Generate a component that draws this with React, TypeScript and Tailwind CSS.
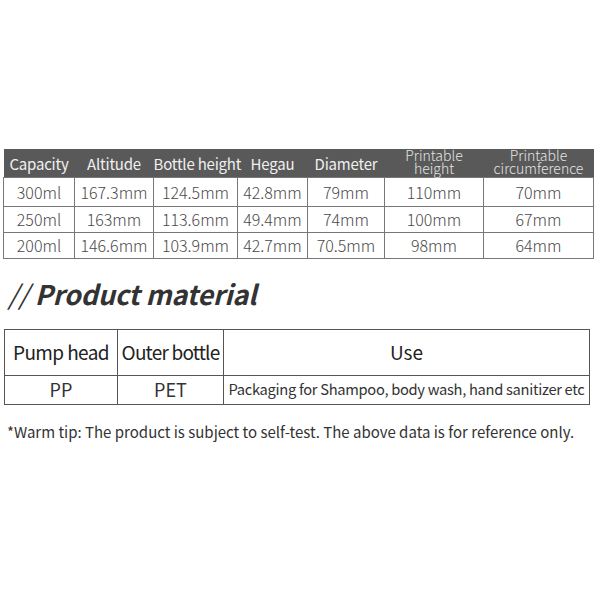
import * as React from "react";

const specHead = [
  { label: "Capacity", w: "w-[71px]" },
  { label: "Altitude", w: "w-[79px]" },
  { label: "Bottle height", w: "w-[84px]" },
  { label: "Hegau", w: "w-[70px]" },
  { label: "Diameter", w: "w-[77px]" },
  { label: "Printable|height", w: "w-[99px]" },
  { label: "Printable|circumference", w: "w-[110px]" },
];

const specRows = [
  ["300ml", "167.3mm", "124.5mm", "42.8mm", "79mm", "110mm", "70mm"],
  ["250ml", "163mm", "113.6mm", "49.4mm", "74mm", "100mm", "67mm"],
  ["200ml", "146.6mm", "103.9mm", "42.7mm", "70.5mm", "98mm", "64mm"],
];

const font = { fontFamily: '"Noto Sans CJK SC", "Noto Sans", sans-serif' };

export default function App() {
  return (
    <div className="w-[600px] h-[600px] bg-white text-[#444]" style={font}>
      <div className="pt-[149px] pl-[3px]">
        <table className="table-fixed border-collapse w-[590px]">
          <thead>
            <tr className="bg-[#595959] h-[28px]">
              {specHead.map((h) => {
                const parts = h.label.split("|");
                return (
                  <th key={h.label} className={`${h.w} p-0 font-normal text-center align-middle`}>
                    {parts.length > 1 ? (
                      <p className="text-[14px] leading-[13px] text-[#e4e4e4] font-light -mt-[1px]">
                        {parts[0]}
                        <br />
                        {parts[1]}
                      </p>
                    ) : (
                      <span className="text-[15px] text-[#f0f0f0] whitespace-nowrap tracking-[-0.2px]">
                        {h.label}
                      </span>
                    )}
                  </th>
                );
              })}
            </tr>
          </thead>
          <tbody>
            {specRows.map((r, i) => (
              <tr key={i} className={i === 0 ? "h-[29px]" : "h-[26px]"}>
                {r.map((c, j) => (
                  <td
                    key={j}
                    className="p-0 border-[1.5px] border-[#777] text-center text-[16px] leading-none font-light text-[#4a4a4a] whitespace-nowrap"
                  >
                    {c}
                  </td>
                ))}
              </tr>
            ))}
          </tbody>
        </table>
      </div>

      <h2 className="mt-[17px] pl-[8px] text-[27px] leading-[36px] font-bold italic text-[#333] tracking-[-0.2px]">
        <span className="font-normal">//</span> Product material
      </h2>

      <div className="mt-[17px] pl-[4px]">
        <table className="table-fixed border-collapse w-[586px]">
          <tbody>
            <tr className="h-[46px]">
              <td className="w-[113px] p-0 border border-[#555] text-center text-[19px] text-[#222] whitespace-nowrap tracking-[-0.6px]">
                Pump head
              </td>
              <td className="w-[106px] p-0 border border-[#555] text-center text-[19px] text-[#222] whitespace-nowrap tracking-[-0.8px]">
                Outer bottle
              </td>
              <td className="p-0 border border-[#555] text-center text-[19px] text-[#222]">Use</td>
            </tr>
            <tr className="h-[29px]">
              <td className="p-0 border border-[#555] text-center text-[18px] text-[#333]">PP</td>
              <td className="p-0 border border-[#555] text-center text-[18px] text-[#333]">PET</td>
              <td className="p-0 border border-[#555] text-center text-[14.7px] text-[#333] whitespace-nowrap tracking-[-0.3px]">
                Packaging for Shampoo, body wash, hand sanitizer etc
              </td>
            </tr>
          </tbody>
        </table>
      </div>

      <p className="mt-[17px] pl-[7px] text-[15px] leading-[20px] text-[#333] whitespace-nowrap">
        *Warm tip: The product is subject to self-test. The above data is for reference only.
      </p>
    </div>
  );
}
